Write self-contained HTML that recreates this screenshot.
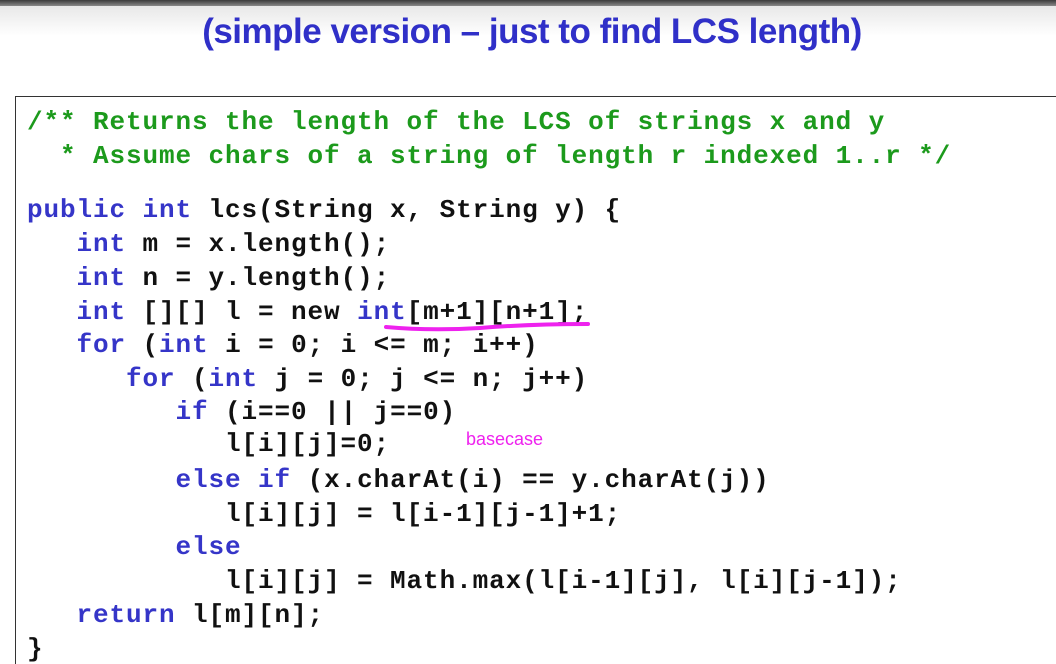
<!DOCTYPE html>
<html><head><style>
html,body{margin:0;padding:0;overflow:hidden;}
body{width:1056px;height:664px;position:relative;overflow:hidden;background:#fff;}
.bar{position:absolute;left:0;top:0;width:1056px;height:6px;background:linear-gradient(#3a3a3a,#888);}
.shade{position:absolute;left:0;top:6px;width:1056px;height:30px;background:linear-gradient(#e8e8e8,#fff);}
.title{position:absolute;left:0;width:1064px;top:12px;text-align:center;font:bold 35px "Liberation Sans",sans-serif;color:#3030c8;letter-spacing:-0.5px;}
.box{position:absolute;left:15px;top:96px;width:1100px;height:580px;border:1.5px solid #333;}
.l{position:absolute;font:bold 26px "Liberation Mono",monospace;letter-spacing:0.9px;white-space:pre;line-height:30px;color:#111;}
.g{color:#1c9a1c}.b{color:#3535c8}
.bc{position:absolute;left:466px;top:429px;font:18px "Liberation Sans",sans-serif;color:#ee22ee;}
</style></head><body>
<div class="bar"></div><div class="shade"></div>
<div class="title">(simple version –  just to find LCS length)</div>
<div class="box"></div>
<div class="l g" style="left:27px;top:107px">/** Returns the length of the LCS of strings x and y</div>
<div class="l g" style="left:27px;top:141px">  * Assume chars of a string of length r indexed 1..r */</div>
<div class="l" style="left:27px;top:195px"><span class="b">public int</span> lcs(String x, String y) {</div>
<div class="l" style="left:27px;top:229px">   <span class="b">int</span> m = x.length();</div>
<div class="l" style="left:27px;top:263px">   <span class="b">int</span> n = y.length();</div>
<div class="l" style="left:27px;top:297px">   <span class="b">int</span> [][] l = new <span class="b">int</span>[m+1][n+1];</div>
<div class="l" style="left:27px;top:330px">   <span class="b">for</span> (<span class="b">int</span> i = 0; i &lt;= m; i++)</div>
<div class="l" style="left:27px;top:364px">      <span class="b">for</span> (<span class="b">int</span> j = 0; j &lt;= n; j++)</div>
<div class="l" style="left:27px;top:397px">         <span class="b">if</span> (i==0 || j==0)</div>
<div class="l" style="left:27px;top:429px">            l[i][j]=0;</div>
<div class="bc">basecase</div>
<div class="l" style="left:27px;top:465px">         <span class="b">else if</span> (x.charAt(i) == y.charAt(j))</div>
<div class="l" style="left:27px;top:499px">            l[i][j] = l[i-1][j-1]+1;</div>
<div class="l" style="left:27px;top:532px">         <span class="b">else</span></div>
<div class="l" style="left:27px;top:566px">            l[i][j] = Math.max(l[i-1][j], l[i][j-1]);</div>
<div class="l" style="left:27px;top:600px">   <span class="b">return</span> l[m][n];</div>
<div class="l" style="left:27px;top:634px">}</div>
<svg style="position:absolute;left:0;top:0" width="1056" height="664"><path d="M386 327 Q430 331 480 328 Q530 324 588 324" stroke="#ee22ee" stroke-width="4" fill="none" stroke-linecap="round"/></svg>
</body></html>
